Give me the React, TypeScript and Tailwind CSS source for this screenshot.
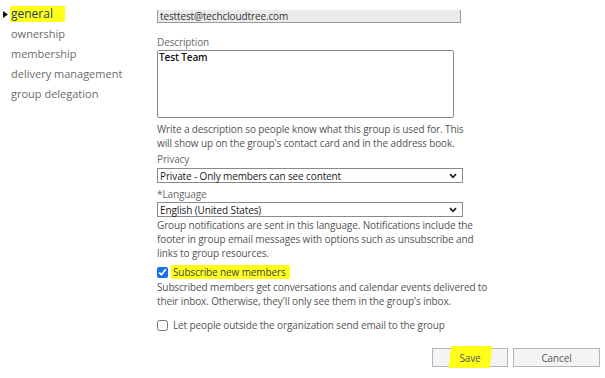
import React from 'react';

const NAV = ['general', 'ownership', 'membership', 'delivery management', 'group delegation'];

function FakeSelect({ value }: { value: string }) {
  return (
    <div className="flex h-[15px] w-[306px] items-center justify-between border border-[#8a8a8a] bg-white pl-[2px] pr-[5px] text-[10px] leading-none text-[#1a1a1a]">
      <span>{value}</span>
      <svg width="8" height="6" viewBox="0 0 8 6">
        <path d="M1 1.2 L4 4.3 L7 1.2" fill="none" stroke="#222" strokeWidth="1.8" />
      </svg>
    </div>
  );
}

export default function App() {
  return (
    <div
      className="flex h-[378px] w-[605px] overflow-hidden bg-white"
      style={{ fontFamily: '"Open Sans", "Noto Sans", sans-serif' }}
    >
      {/* left nav */}
      <nav className="flex w-[157px] shrink-0 flex-col pt-[4px] text-[11px] leading-[20px] text-[#6b6b6b]">
        {NAV.map((item, i) => (
          <div key={item} className="flex h-[20px] items-center">
            <span className="flex w-[11px] justify-center">
              {i === 0 && (
                <svg width="5" height="7" viewBox="0 0 5 7">
                  <path d="M0 0 L5 3.5 L0 7 Z" fill="#111" />
                </svg>
              )}
            </span>
            {i === 0 ? (
              <span className="-ml-[1px] bg-[#ffff1a] pl-[1px] pr-[12px] text-[12px] leading-[16px] text-[#1e3f66]">{item}</span>
            ) : (
              <span>{item}</span>
            )}
          </div>
        ))}
      </nav>

      {/* form */}
      <div className="flex flex-1 flex-col pt-[10px] text-[10px] leading-[14px] tracking-[-0.12px] text-[#555]">
        <div className="flex h-[13px] w-[304px] items-center border-x border-b border-[#9a9a9a] bg-[#ebebeb] pl-[2px] text-[#333]">
          testtest@techcloudtree.com
        </div>

        <div className="mt-[12px] text-[#6b6b6b]">Description</div>
        <div className="mt-[1px] h-[68px] w-[297px] rounded-[2px] border border-[#8a8a8a] bg-white pl-[1px] font-semibold leading-[13px] text-[#111]">
          Test Team
        </div>

        <p className="mt-[4px] whitespace-nowrap">
          Write a description so people know what this group is used for. This
          <br />
          will show up on the group's contact card and in the address book.
        </p>

        <div className="mt-[2px] text-[#6b6b6b]">Privacy</div>
        <div className="mt-[2px]">
          <FakeSelect value="Private - Only members can see content" />
        </div>

        <div className="mt-[4px] text-[#6b6b6b]">*Language</div>
        <div className="mt-[1px]">
          <FakeSelect value="English (United States)" />
        </div>

        <p className="mt-[1px] whitespace-nowrap">
          Group notifications are sent in this language. Notifications include the
          <br />
          footer in group email messages with options such as unsubscribe and
          <br />
          links to group resources.
        </p>

        <label className="mt-[5px] flex items-center">
          <input type="checkbox" defaultChecked className="m-0 h-[11px] w-[11px] accent-[#1a73e8]" />
          <span className="ml-[3px] bg-[#ffff1a] pl-[2px] pr-[4px] text-[#444]">Subscribe new members</span>
        </label>

        <p className="mt-[1px] whitespace-nowrap">
          Subscribed members get conversations and calendar events delivered to
          <br />
          their inbox. Otherwise, they'll only see them in the group's inbox.
        </p>

        <label className="mt-[10px] flex items-center">
          <input type="checkbox" className="m-0 h-[11px] w-[11px]" />
          <span className="ml-[5px] text-[#555]">Let people outside the organization send email to the group</span>
        </label>

        <div className="mt-[16px] flex justify-end gap-[5px] pr-[5px]">
          <button className="relative h-[19px] w-[76px] border border-[#b5b5b5] bg-[#f4f4f4] text-[10px] text-[#555]">
            <span className="absolute left-[17px] top-[-3px] h-[22px] w-[41px] -skew-x-6 bg-[#ffff1a]" />
            <span className="relative">Save</span>
          </button>
          <button className="h-[19px] w-[87px] border border-[#b5b5b5] bg-[#f4f4f4] text-[10px] text-[#555]">
            Cancel
          </button>
        </div>
      </div>
    </div>
  );
}
